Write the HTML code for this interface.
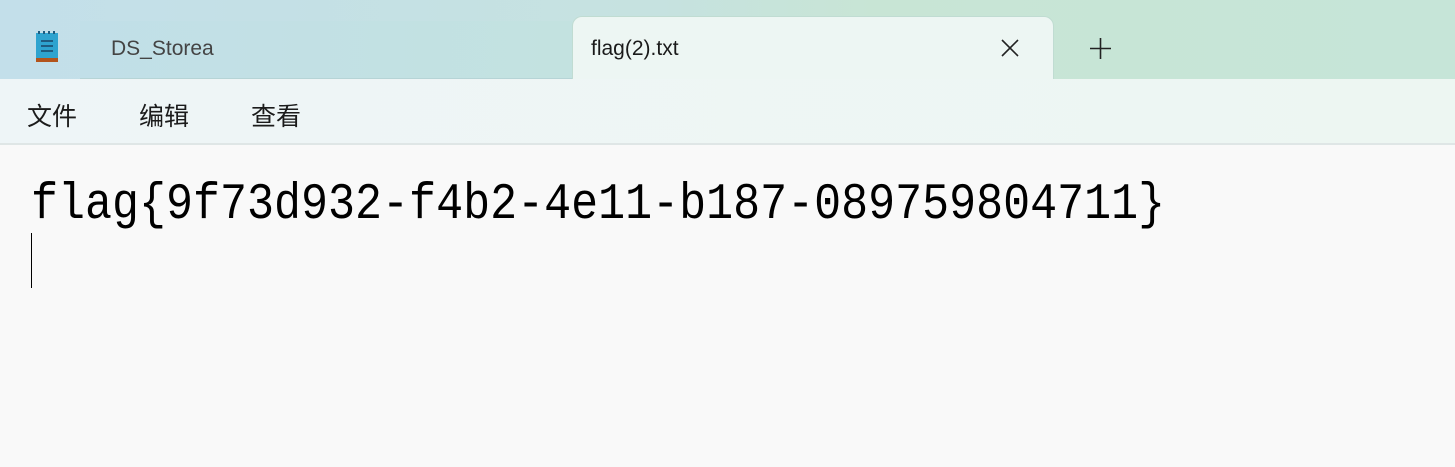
<!DOCTYPE html>
<html><head><meta charset="utf-8"><style>
body{margin:0;width:1455px;height:467px;overflow:hidden;background:#f9f9f9;position:relative;font-family:"Liberation Sans","Noto Sans CJK SC",sans-serif}
.top{position:absolute;left:0;top:0;width:1455px;height:79px;background:linear-gradient(90deg,#c3dfea 0%,#c6e2e0 45%,#c8e5d5 60%,#c6e5d8 100%)}
.inactive{position:absolute;left:80px;top:21px;width:492px;height:57px;background:linear-gradient(90deg,#c1dfe8,#c3e2e0);border-bottom:1px solid #b6d4d6}
.tab{position:absolute;left:572px;top:16px;width:480px;height:66px;background:#edf6f3;border-radius:10px 10px 0 0;border:1px solid #c0dcd2;border-bottom:none}
.tab span{position:absolute;left:18px;top:20px;font-size:21px;color:#1a1a1a}
.menu{position:absolute;left:0;top:79px;width:1455px;height:64px;background:linear-gradient(90deg,#eef5f7,#edf6f2);border-bottom:2px solid #dfe6e6}
.menu span{position:absolute;top:18px;font-size:25px;color:#1b1b1b}
.txt{position:absolute;left:31px;top:176px;font-family:"Liberation Mono",monospace;font-size:45px;color:#000;white-space:pre;transform:scaleY(1.13);transform-origin:0 0}
.caret{position:absolute;left:31px;top:233px;width:1px;height:55px;background:#000}
</style></head><body>
<div class="top"></div>
<div class="inactive"></div>
<svg style="position:absolute;left:34px;top:30px" width="26" height="34" viewBox="0 0 26 34">
<rect x="2" y="3" width="22" height="26" fill="#2ea3cf"/>
<rect x="2" y="28" width="22" height="4" fill="#b3541c"/>
<g fill="#1e5c80"><rect x="4" y="1" width="2" height="3"/><rect x="9" y="1" width="2" height="3"/><rect x="14" y="1" width="2" height="3"/><rect x="19" y="1" width="2" height="3"/>
<rect x="7" y="10" width="12" height="2"/><rect x="7" y="15" width="12" height="2"/><rect x="7" y="20" width="12" height="2"/></g>
</svg>
<div style="position:absolute;left:111px;top:37px;font-size:21px;color:#444">DS_Storea</div>
<div class="tab"><span>flag(2).txt</span>
<svg style="position:absolute;left:428px;top:22px" width="18" height="18"><path d="M1 1L17 17M17 1L1 17" stroke="#222" stroke-width="1.6"/></svg>
</div>
<svg style="position:absolute;left:1090px;top:38px" width="21" height="21"><path d="M10.5 0V21M0 10.5H21" stroke="#222" stroke-width="1.6"/></svg>
<div class="menu"><span style="left:27px">文件</span><span style="left:139px">编辑</span><span style="left:251px">查看</span></div>
<div class="txt">flag{9f73d932-f4b2-4e11-b187-089759804711}</div>
<div class="caret"></div>
</body></html>
